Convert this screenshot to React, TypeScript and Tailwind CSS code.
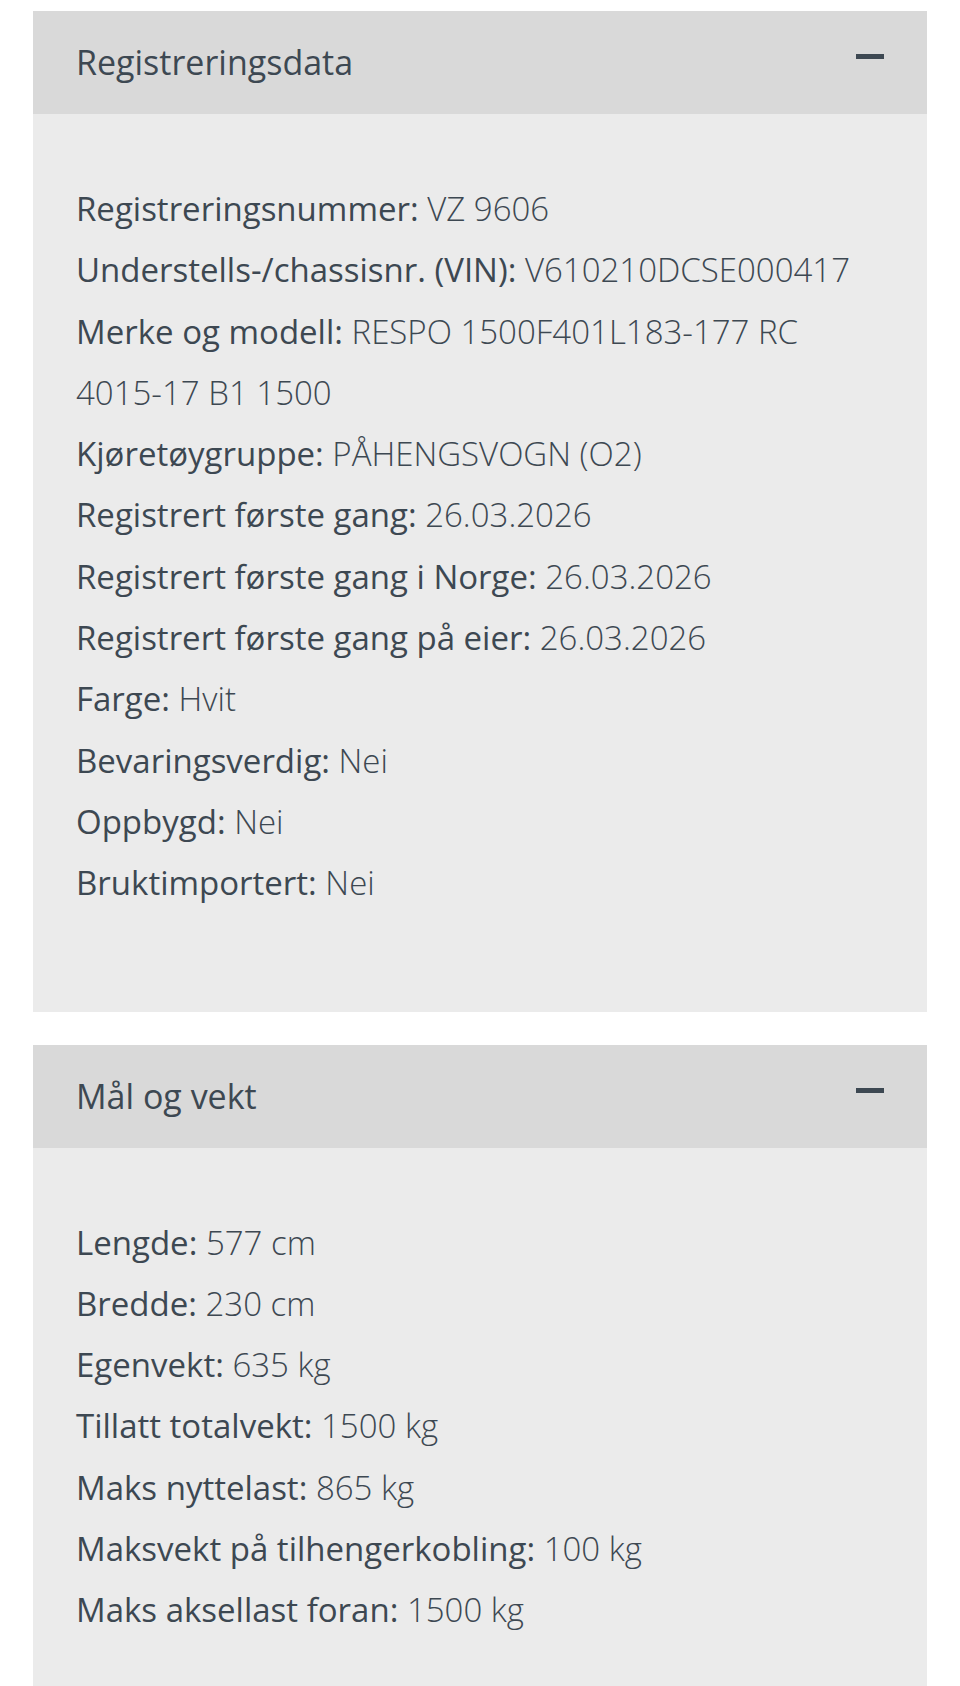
import React from 'react';

type Row = { label: string; value: string };

const registrering: Row[] = [
  { label: 'Registreringsnummer', value: 'VZ 9606' },
  { label: 'Understells-/chassisnr. (VIN)', value: 'V610210DCSE000417' },
  { label: 'Merke og modell', value: 'RESPO 1500F401L183-177 RC 4015-17 B1 1500' },
  { label: 'Kjøretøygruppe', value: 'PÅHENGSVOGN (O2)' },
  { label: 'Registrert første gang', value: '26.03.2026' },
  { label: 'Registrert første gang i Norge', value: '26.03.2026' },
  { label: 'Registrert første gang på eier', value: '26.03.2026' },
  { label: 'Farge', value: 'Hvit' },
  { label: 'Bevaringsverdig', value: 'Nei' },
  { label: 'Oppbygd', value: 'Nei' },
  { label: 'Bruktimportert', value: 'Nei' },
];

const malOgVekt: Row[] = [
  { label: 'Lengde', value: '577 cm' },
  { label: 'Bredde', value: '230 cm' },
  { label: 'Egenvekt', value: '635 kg' },
  { label: 'Tillatt totalvekt', value: '1500 kg' },
  { label: 'Maks nyttelast', value: '865 kg' },
  { label: 'Maksvekt på tilhengerkobling', value: '100 kg' },
  { label: 'Maks aksellast foran', value: '1500 kg' },
];

function Section({ title, rows }: { title: string; rows: Row[] }) {
  return (
    <section className="bg-[#ebebeb]">
      <div className="flex h-[103px] items-center justify-between bg-[#d9d9d9] px-[43px]">
        <h2 className="text-[34px] font-normal text-[#3d4852]">{title}</h2>
        {/* collapse toggle (minus) */}
        <span className="mb-[12px] block h-[5px] w-[28px] bg-[#3d4852]" />
      </div>
      <dl className="px-[43px] pt-[64px] pb-[98px] text-[33px] leading-[61.3px] text-[#3d4852]">
        {rows.map((r) => (
          <div key={r.label}>
            <dt className="inline font-normal">{r.label}:</dt>{' '}
            <dd className="inline font-light">{r.value}</dd>
          </div>
        ))}
      </dl>
    </section>
  );
}

export default function App() {
  return (
    <div className="min-h-[1686px] bg-white px-[33px] pt-[11px] font-['Open_Sans',sans-serif]">
      <div className="flex flex-col gap-[33px]">
        <Section title="Registreringsdata" rows={registrering} />
        <Section title="Mål og vekt" rows={malOgVekt} />
      </div>
    </div>
  );
}
